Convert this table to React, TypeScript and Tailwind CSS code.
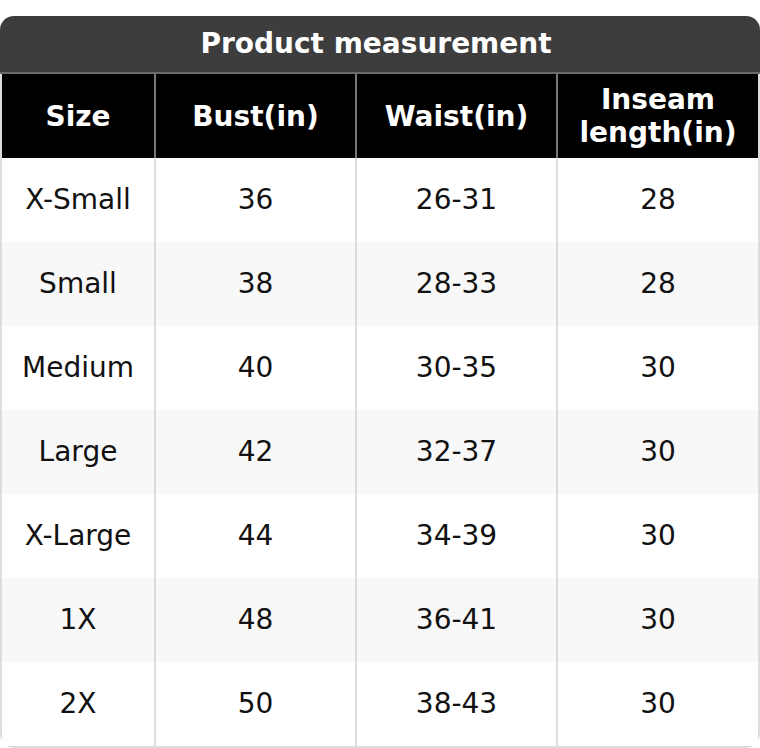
import React from 'react'

const rows = [
  { size: 'X-Small', bust: '36', waist: '26-31', inseam: '28' },
  { size: 'Small', bust: '38', waist: '28-33', inseam: '28' },
  { size: 'Medium', bust: '40', waist: '30-35', inseam: '30' },
  { size: 'Large', bust: '42', waist: '32-37', inseam: '30' },
  { size: 'X-Large', bust: '44', waist: '34-39', inseam: '30' },
  { size: '1X', bust: '48', waist: '36-41', inseam: '30' },
  { size: '2X', bust: '50', waist: '38-43', inseam: '30' },
]

export default function App() {
  return (
    <div className="min-h-screen bg-white pt-[16px] font-['DejaVu_Sans',sans-serif] text-[28px]">
      <div className="w-[760px] overflow-hidden rounded-[14px]">
        <div className="flex h-[58px] items-center justify-center border-b-2 border-[#6a6a6a] bg-[#3d3d3d] pr-[8px] font-bold text-white">
          Product measurement
        </div>
        <div className="rounded-b-[14px] border-x-2 border-b-2 border-[#dcdcdc]">
          <div className="grid h-[84px] grid-cols-[152px_201px_201px_1fr] bg-black font-bold leading-[33px] text-white">
            <div className="flex items-center justify-center">Size</div>
            <div className="flex items-center justify-center border-l-2 border-[#777]">Bust(in)</div>
            <div className="flex items-center justify-center border-l-2 border-[#777]">Waist(in)</div>
            <div className="flex items-center justify-center border-l-2 border-[#777] text-center">
              Inseam<br />length(in)
            </div>
          </div>
          {rows.map((r, i) => (
            <div
              key={r.size}
              className={`grid h-[84px] grid-cols-[152px_201px_201px_1fr] text-[#111] ${i % 2 === 1 ? 'bg-[#f8f8f8]' : 'bg-white'}`}
            >
              <div className="flex items-center justify-center">{r.size}</div>
              <div className="flex items-center justify-center border-l-2 border-[#dcdcdc]">{r.bust}</div>
              <div className="flex items-center justify-center border-l-2 border-[#dcdcdc]">{r.waist}</div>
              <div className="flex items-center justify-center border-l-2 border-[#dcdcdc]">{r.inseam}</div>
            </div>
          ))}
        </div>
      </div>
    </div>
  )
}
